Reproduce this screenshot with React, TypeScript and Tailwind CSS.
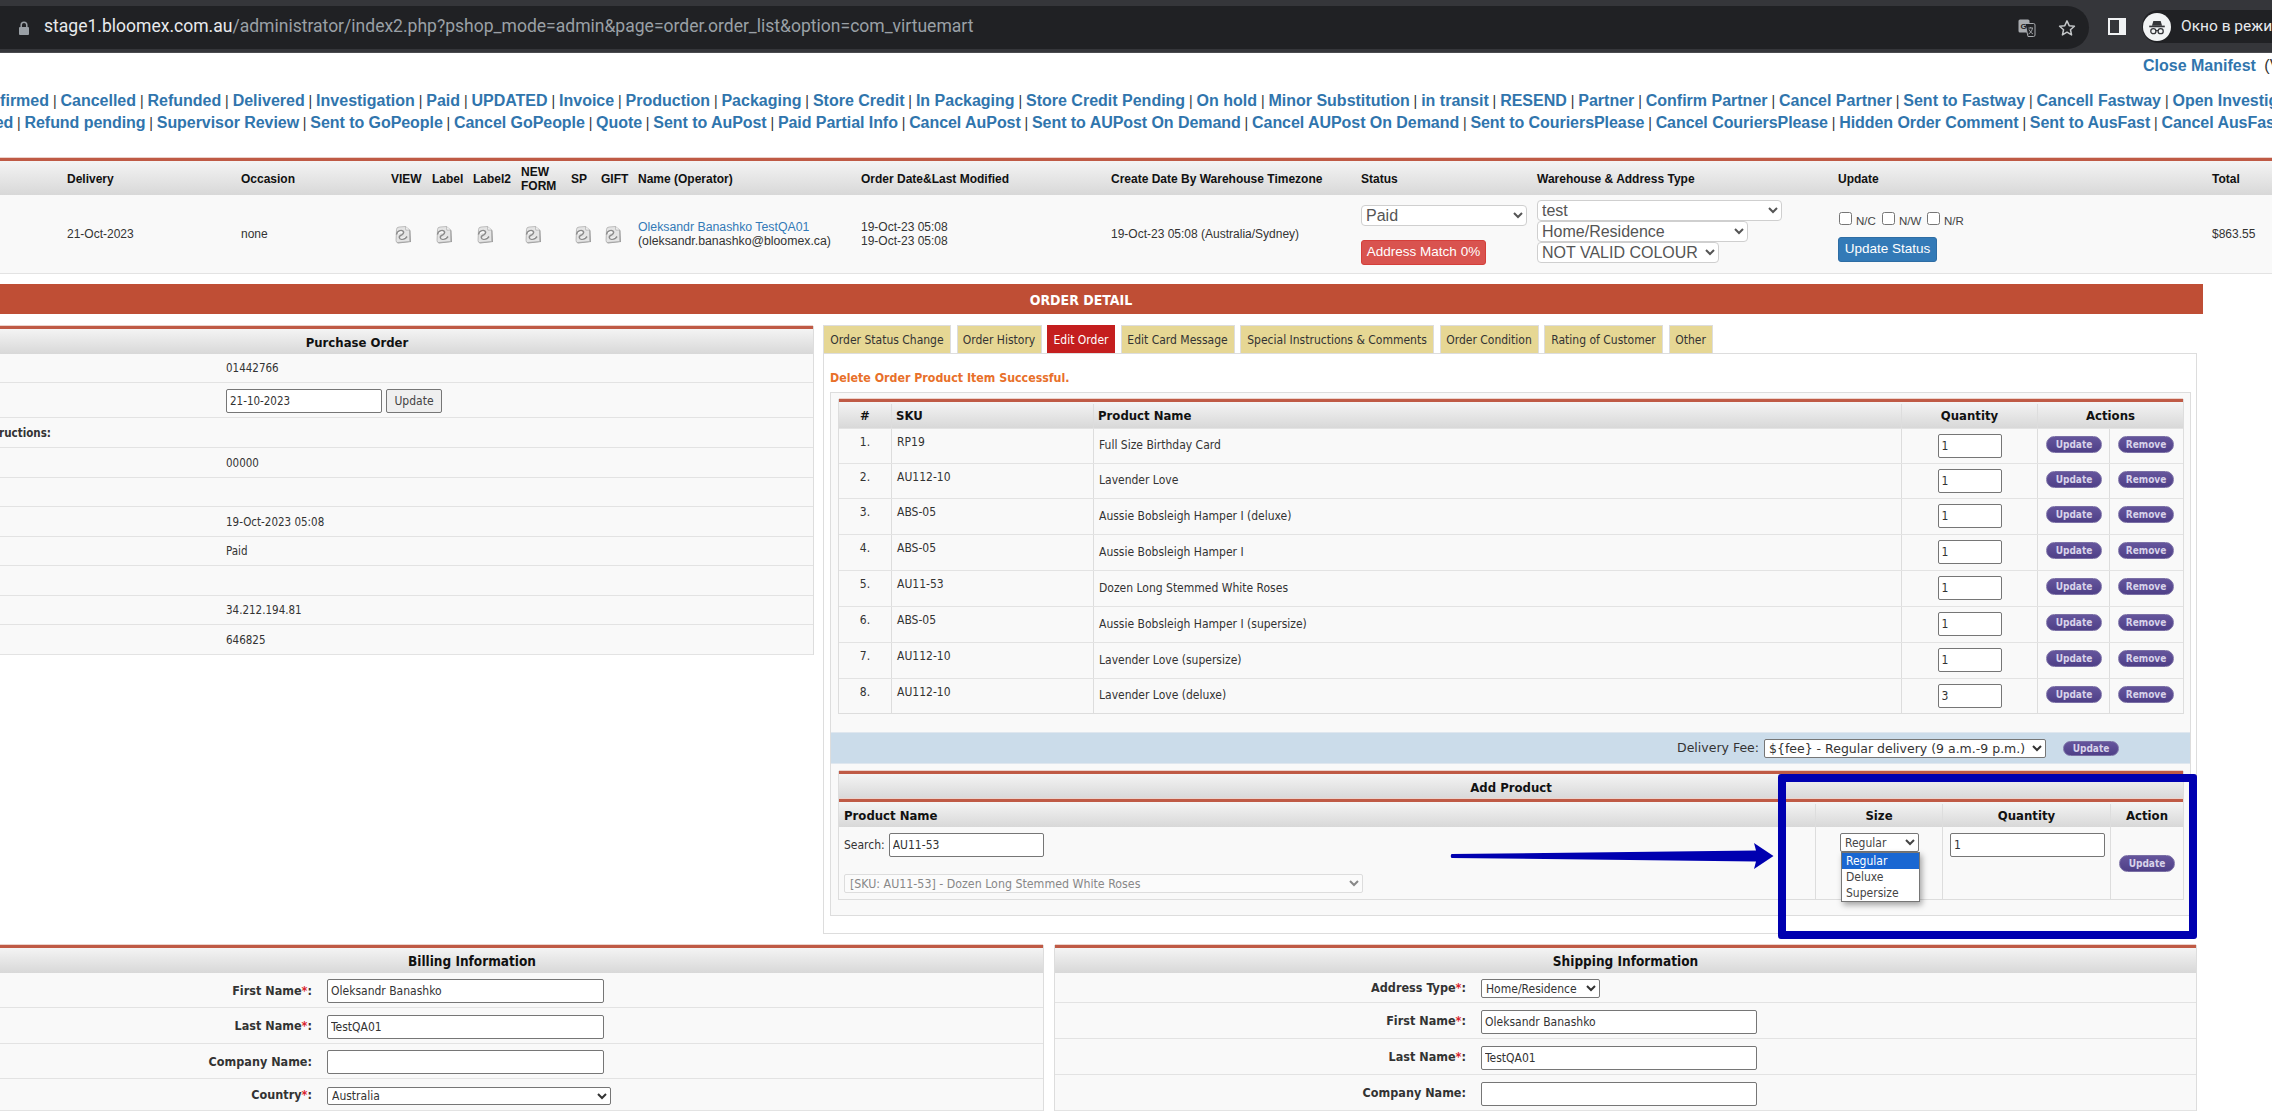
import React from "react";

const band = "border-t-[3px] border-t-[#bf5a45] pt-[2px] shadow-[0_-1px_0_#ecd2cb] bg-linear-to-b from-[#f4f4f4] to-[#d8d8d8]";
const inputCls = "bg-white border border-[#767676] rounded-[2px] px-[3px] text-[#333] outline-none";

function PageIcon() {
  return (
    <svg width="18" height="18" viewBox="0 0 18 18">
      <path d="M3 3.5 Q3 1.5 5 1.5 L12 0.8 L16.5 4.5 L17 16 L4 17.5 Q2.5 17 2.5 15 Z" fill="#9c9c9c" />
      <path d="M2.5 3.5 Q2.5 1.2 5 1 L11.5 0.5 L15.5 4 L15.8 15.5 L3.5 16.5 Q2 16.2 2 14.5 Z" fill="#e4e4e4" stroke="#a8a8a8" strokeWidth="0.7" />
      <path d="M11.5 0.5 L11.8 4.2 L15.5 4" fill="#f6f6f6" stroke="#a8a8a8" strokeWidth="0.7" />
      <path d="M2.5 8.5 C3 5 7 3.8 9 5.2 C10.8 6.6 8.5 8.8 6.5 9.5 C4.5 10.4 5 13 7.5 13.2 C10 13.4 12 12 13 10.5" fill="none" stroke="#8a8a8a" strokeWidth="1.5" />
      <path d="M4 7.5 C5.5 6 7.5 5.8 8.3 6.5" fill="none" stroke="#ffffff" strokeWidth="1.1" />
      <path d="M6.5 12 C8 12.6 10 12 11.5 10.8" fill="none" stroke="#ffffff" strokeWidth="0.9" />
    </svg>
  );
}

function PurpleBtn({ label, cls = "h-[17px]" }: { label: string; cls?: string }) {
  return (
    <span className={`inline-flex w-[56px] items-center justify-center rounded-full border border-[#7a6fa5] bg-linear-to-b from-[#65559c] to-[#4f4088] text-[10px] font-bold text-[#d8d3ea] ${cls}`}>
      {label}
    </span>
  );
}

function LinkRow({ items, cls }: { items: string[]; cls: string }) {
  return (
    <div className={`h-[22px] whitespace-nowrap text-[16px] leading-[22px] ${cls}`}>
      {items.map((t, i) => (
        <React.Fragment key={i}>
          {i > 0 && <span className="text-[14px] font-normal text-[#333]"> | </span>}
          <a className="font-bold text-[#3075ad]">{t}</a>
        </React.Fragment>
      ))}
    </div>
  );
}

const row1 = ["Confirmed", "Cancelled", "Refunded", "Delivered", "Investigation", "Paid", "UPDATED", "Invoice", "Production", "Packaging", "Store Credit", "In Packaging", "Store Credit Pending", "On hold", "Minor Substitution", "in transit", "RESEND", "Partner", "Confirm Partner", "Cancel Partner", "Sent to Fastway", "Cancell Fastway", "Open Investigation"];
const row2 = ["Declined", "Refund pending", "Supervisor Review", "Sent to GoPeople", "Cancel GoPeople", "Quote", "Sent to AuPost", "Paid Partial Info", "Cancel AuPost", "Sent to AUPost On Demand", "Cancel AUPost On Demand", "Sent to CouriersPlease", "Cancel CouriersPlease", "Hidden Order Comment", "Sent to AusFast", "Cancel AusFast"];

const orderCols = "grid grid-cols-[67px_174px_150px_41px_41px_48px_50px_30px_37px_223px_250px_250px_176px_301px_374px_60px]";
const nativeTop = "rounded-[4px] border border-[#cfcfcf] bg-white text-[16px] text-[#555]";

function ChromeBar() {
  return (
    <div className="flex h-[53px] items-start border-b border-b-[#4a4b4f] bg-[#35363a]">
      <div className="mt-[6px] flex h-[43px] w-[2089px] items-center rounded-r-[22px] bg-[#202124] pl-[18px]">
        <svg width="12" height="14" viewBox="0 0 12 14" className="mr-[14px]">
          <rect x="1" y="6" width="10" height="8" rx="1" fill="#9aa0a6" />
          <path d="M3.2 6 V4 a2.8 2.8 0 0 1 5.6 0 V6" fill="none" stroke="#9aa0a6" strokeWidth="1.5" />
        </svg>
        <div className="whitespace-nowrap pb-[2px] font-['Roboto',sans-serif] text-[17.55px]">
          <span className="text-[#e8eaed]">stage1.bloomex.com.au</span>
          <span className="text-[#9aa0a6]">/administrator/index2.php?pshop_mode=admin&amp;page=order.order_list&amp;option=com_virtuemart</span>
        </div>
        <div className="ml-auto flex items-center gap-[22px] pr-[13px]">
          <svg width="18" height="18" viewBox="0 0 18 18">
            <rect x="0.5" y="0.5" width="11" height="13" rx="1.5" fill="#a8abaf" />
            <path d="M7 4.5 H15.5 a1.5 1.5 0 0 1 1.5 1.5 V16 a1.5 1.5 0 0 1 -1.5 1.5 H10 Z" fill="#202124" stroke="#a8abaf" />
            <text x="2.5" y="10" fontSize="8" fontWeight="700" fill="#202124" fontFamily="Liberation Sans">G</text>
            <path d="M10.5 9 H15 M12.7 8 V9 M14.5 9 C14 12 12.5 14 10.5 15 M11 10.5 C12 12.5 13.5 14 15 15" fill="none" stroke="#a8abaf" strokeWidth="0.9" />
          </svg>
          <svg width="18" height="18" viewBox="0 0 24 24" fill="none" stroke="#c4c7c9" strokeWidth="2" strokeLinejoin="round">
            <path d="M12 2.5 l2.9 6.4 7 .7 -5.3 4.7 1.5 6.9 -6.1 -3.6 -6.1 3.6 1.5 -6.9 L2.1 9.6 l7 -.7 Z" />
          </svg>
        </div>
      </div>
      <div className="ml-[19px] mt-[18px] flex h-[17px] w-[18px] justify-end border-2 border-[#f1f3f4] bg-[#35363a]">
        <div className="h-full w-[5px] bg-[#f1f3f4]" />
      </div>
      <div className="ml-[16px] mt-[10px] flex h-[33px] w-[130px] items-center overflow-hidden rounded-l-full bg-[#202124] pl-[1px]">
        <div className="flex h-[28px] w-[28px] shrink-0 items-center justify-center rounded-full bg-[#f1f3f4]">
          <svg width="22" height="22" viewBox="0 0 24 24">
            <path d="M8 5.5 H16 L17.5 10.5 H6.5 Z" fill="#35363a" />
            <rect x="3.5" y="10.5" width="17" height="1.8" fill="#35363a" />
            <circle cx="8" cy="16.5" r="2.8" fill="none" stroke="#35363a" strokeWidth="1.4" />
            <circle cx="16" cy="16.5" r="2.8" fill="none" stroke="#35363a" strokeWidth="1.4" />
            <path d="M10.8 16 H13.2" stroke="#35363a" strokeWidth="1.2" />
          </svg>
        </div>
        <span className="ml-[10px] whitespace-nowrap font-['Roboto',sans-serif] text-[15.5px] text-[#e8eaed]">Окно в режиме инкогнито</span>
      </div>
    </div>
  );
}

function OrdersTable() {
  const heads = ["", "Delivery", "Occasion", "VIEW", "Label", "Label2", "NEW FORM", "SP", "GIFT", "Name (Operator)", "Order Date&Last Modified", "Create Date By Warehouse Timezone", "Status", "Warehouse & Address Type", "Update", "Total"];
  return (
    <div className="mt-[24px] font-['Liberation_Sans',sans-serif] text-[12px] text-[#333]">
      <div className={`${orderCols} ${band} h-[37px] items-center font-bold leading-[14.5px] text-[#111]`}>
        {heads.map((h, i) => (
          <div key={i} className={i === 6 ? "w-[40px]" : "whitespace-nowrap"}>{h}</div>
        ))}
      </div>
      <div className={`${orderCols} h-[79px] border-b border-b-[#e3e3e3] bg-[#f9f9f9]`}>
        <div />
        <div className="self-center">21-Oct-2023</div>
        <div className="self-center">none</div>
        {[0, 1, 2, 3, 4, 5].map((i) => (
          <div key={i} className="self-center pl-[3px] pt-[1px]"><PageIcon /></div>
        ))}
        <div className="self-center whitespace-nowrap text-[12.3px] leading-[14px]">
          <div className="text-[#337ab7]">Oleksandr Banashko TestQA01</div>
          <div>(oleksandr.banashko@bloomex.ca)</div>
        </div>
        <div className="self-center leading-[14px]">
          <div>19-Oct-23 05:08</div>
          <div>19-Oct-23 05:08</div>
        </div>
        <div className="self-center whitespace-nowrap">19-Oct-23 05:08 (Australia/Sydney)</div>
        <div className="flex flex-col items-start pt-[10px]">
          <select className={`${nativeTop} h-[21px] w-[166px]`}><option>Paid</option></select>
          <button className="mt-[14px] h-[25px] w-[125px] whitespace-nowrap rounded-[3px] border border-[#d43f3a] bg-[#d9534f] text-[13.5px] text-white">Address Match 0%</button>
        </div>
        <div className="flex flex-col items-start pt-[5px]">
          <select className={`${nativeTop} h-[21px] w-[245px]`}><option>test</option></select>
          <select className={`${nativeTop} h-[21px] w-[211px]`}><option>Home/Residence</option></select>
          <select className={`${nativeTop} h-[21px] w-[182px]`}><option>NOT VALID COLOUR</option></select>
        </div>
        <div className="flex flex-col items-start pl-[1px] pt-[17px]">
          <div className="flex h-[25px] items-start text-[11.5px] text-[#444]">
            <input type="checkbox" className="mr-[4px] h-[13px] w-[13px]" />
            <span className="mt-[1px] w-[26px]">N/C</span>
            <input type="checkbox" className="mr-[4px] h-[13px] w-[13px]" />
            <span className="mt-[1px] w-[28px]">N/W</span>
            <input type="checkbox" className="mr-[4px] h-[13px] w-[13px]" />
            <span className="mt-[1px]">N/R</span>
          </div>
          <button className="-ml-[1px] h-[25px] w-[99px] rounded-[3px] border border-[#2e6da4] bg-[#337ab7] text-[13.5px] text-white">Update Status</button>
        </div>
        <div className="self-center">$863.55</div>
      </div>
    </div>
  );
}

const poRows: { label?: string; value?: string; cls: string; input?: boolean }[] = [
  { value: "01442766", cls: "h-[29px]" },
  { input: true, cls: "h-[35px]" },
  { label: "Special Instructions:", cls: "h-[30px]" },
  { value: "00000", cls: "h-[30px]" },
  { cls: "h-[29px]" },
  { value: "19-Oct-2023 05:08", cls: "h-[30px]" },
  { value: "Paid", cls: "h-[29px]" },
  { cls: "h-[30px]" },
  { value: "34.212.194.81", cls: "h-[29px]" },
  { value: "646825", cls: "h-[30px]" },
];

function PurchaseOrder() {
  return (
    <div className="mt-[1px] w-[913px] shrink-0 self-start border-r border-r-[#ddd] text-[11.5px]">
      <div className={`${band} flex h-[28px] items-center justify-center text-[13px] font-bold text-[#111]`}>Purchase Order</div>
      {poRows.map((r, i) => (
        <div key={i} className={`grid grid-cols-[150px_175px_1fr] items-center border-b border-b-[#e3e3e3] bg-[#f9f9f9] pt-[2px] ${r.cls}`}>
          <div className="whitespace-nowrap text-right font-bold">{r.label}</div>
          <div />
          <div className="flex items-center">
            {r.value}
            {r.input && (
              <>
                <input readOnly defaultValue="21-10-2023" className={`${inputCls} h-[24px] w-[156px]`} />
                <button className="ml-[4px] h-[24px] w-[56px] rounded-[2px] border border-[#767676] bg-[#efefef] text-[12px] text-[#444]">Update</button>
              </>
            )}
          </div>
        </div>
      ))}
    </div>
  );
}

const tabs: { t: string; cls: string; on?: boolean }[] = [
  { t: "Order Status Change", cls: "w-[128px]" },
  { t: "Order History", cls: "w-[85px]" },
  { t: "Edit Order", cls: "w-[68px]", on: true },
  { t: "Edit Card Message", cls: "w-[114px]" },
  { t: "Special Instructions & Comments", cls: "w-[194px]" },
  { t: "Order Condition", cls: "w-[99px]" },
  { t: "Rating of Customer", cls: "w-[119px]" },
  { t: "Other", cls: "w-[44px]" },
];

const items: { n: string; sku: string; name: string; q: string; cls: string }[] = [
  { n: "1.", sku: "RP19", name: "Full Size Birthday Card", q: "1", cls: "h-[35px]" },
  { n: "2.", sku: "AU112-10", name: "Lavender Love", q: "1", cls: "h-[35px]" },
  { n: "3.", sku: "ABS-05", name: "Aussie Bobsleigh Hamper I (deluxe)", q: "1", cls: "h-[36px]" },
  { n: "4.", sku: "ABS-05", name: "Aussie Bobsleigh Hamper I", q: "1", cls: "h-[36px]" },
  { n: "5.", sku: "AU11-53", name: "Dozen Long Stemmed White Roses", q: "1", cls: "h-[36px]" },
  { n: "6.", sku: "ABS-05", name: "Aussie Bobsleigh Hamper I (supersize)", q: "1", cls: "h-[36px]" },
  { n: "7.", sku: "AU112-10", name: "Lavender Love (supersize)", q: "1", cls: "h-[36px]" },
  { n: "8.", sku: "AU112-10", name: "Lavender Love (deluxe)", q: "3", cls: "h-[35px]" },
];

const itemCols = "grid grid-cols-[53px_202px_808px_136px_72px_73px]";
const cellB = "border-r border-r-[#ddd]";

function ItemsTable() {
  return (
    <div className="ml-[7px] mr-[6px] mt-[6px] border-x border-b border-[#ddd] border-t-0">
      <div className={`${itemCols} ${band} h-[29px] text-[13px] font-bold text-[#111]`}>
        <div className={`${cellB} flex items-center justify-center`}>#</div>
        <div className={`${cellB} flex items-center pl-[4px]`}>SKU</div>
        <div className={`${cellB} flex items-center pl-[4px]`}>Product Name</div>
        <div className={`${cellB} flex items-center justify-center`}>Quantity</div>
        <div className="col-span-2 flex items-center justify-center">Actions</div>
      </div>
      {items.map((r, i) => (
        <div key={i} className={`${itemCols} border-t border-t-[#e3e3e3] first:border-t-0 ${r.cls}`}>
          <div className={`${cellB} pt-[6px] text-center leading-[14px]`}>{r.n}</div>
          <div className={`${cellB} pl-[5px] pt-[6px] leading-[14px]`}>{r.sku}</div>
          <div className={`${cellB} flex items-center pb-[2px] pl-[5px]`}>{r.name}</div>
          <div className={`${cellB} flex justify-center pt-[5px]`}>
            <input readOnly defaultValue={r.q} className={`${inputCls} h-[24px] w-[64px]`} />
          </div>
          <div className={`${cellB} pl-[8px] pt-[6px]`}><PurpleBtn label="Update" /></div>
          <div className="pl-[8px] pt-[6px]"><PurpleBtn label="Remove" /></div>
        </div>
      ))}
    </div>
  );
}

function AddProduct() {
  const cols = "grid grid-cols-[977px_127px_168px_72px]";
  return (
    <div className="ml-[7px] mr-[6px] mt-[7px] border-x border-b border-[#ddd]">
      <div className={`${band} flex h-[28px] items-center justify-center text-[13px] font-bold text-[#111]`}>Add Product</div>
      <div className={`${cols} ${band} h-[28px] text-[13px] font-bold text-[#111]`}>
        <div className={`${cellB} flex items-center pl-[5px]`}>Product Name</div>
        <div className={`${cellB} flex items-center justify-center`}>Size</div>
        <div className={`${cellB} flex items-center justify-center`}>Quantity</div>
        <div className="flex items-center justify-center">Action</div>
      </div>
      <div className={`${cols} h-[72px]`}>
        <div className={`${cellB} pl-[5px] pt-[6px]`}>
          <div className="flex items-center">
            <span>Search:</span>
            <input readOnly defaultValue="AU11-53" className={`${inputCls} ml-[4px] h-[24px] w-[155px]`} />
          </div>
          <select disabled className="mt-[17px] h-[19px] w-[519px] rounded-[2px] border border-[#ddd] bg-[#fbfbfb] pl-[1px] text-[12.3px] text-[#888] opacity-100">
            <option>[SKU: AU11-53] - Dozen Long Stemmed White Roses</option>
          </select>
        </div>
        <div className={`${cellB} relative pl-[24px] pt-[6px]`}>
          <select className="h-[19px] w-[79px] rounded-[2px] border border-[#767676] bg-white text-[12px] text-[#444]"><option>Regular</option></select>
          <div className="absolute left-[25px] top-[25px] z-10 w-[79px] border border-[#767676] bg-white text-[12px] leading-[16px] text-[#444] shadow-[2px_3px_6px_rgba(0,0,0,0.35)]">
            <div className="bg-[#1967d2] pl-[4px] text-white">Regular</div>
            <div className="pl-[4px]">Deluxe</div>
            <div className="pl-[4px]">Supersize</div>
          </div>
        </div>
        <div className={`${cellB} pl-[7px] pt-[6px]`}>
          <input readOnly defaultValue="1" className={`${inputCls} h-[24px] w-[155px]`} />
        </div>
        <div className="pl-[8px] pt-[27px]"><PurpleBtn label="Update" /></div>
      </div>
    </div>
  );
}

function EditPanel() {
  return (
    <div className="ml-[9px] w-[1374px] shrink-0 text-[12px]">
      <div className="flex h-[28px] gap-[5.5px]">
        {tabs.map((t) => (
          <div key={t.t} className={`flex items-center justify-center whitespace-nowrap border-x border-t ${t.cls} ${t.on ? "border-[#c41e1e] bg-[#c41e1e] text-white" : "border-[#ddd] bg-[#e6d794] text-[#333]"}`}>{t.t}</div>
        ))}
      </div>
      <div className="h-[581px] border border-[#ddd] pl-[6px] pr-[5px]">
        <div className="h-[38px] pt-[16px] text-[12.3px] font-bold leading-[16px] text-[#e8702a]">Delete Order Product Item Successful.</div>
        <div className="h-[524px] border border-[#ddd] bg-[#f9f9f9] text-[#333]">
          <ItemsTable />
          <div className="mt-[18px] flex h-[32px] items-center justify-end border-y border-y-[#dfe7ef] bg-[#cbdcea] pr-[71px]">
            <span className="mr-[5px] font-['DejaVu_Sans',sans-serif] text-[12.5px]">Delivery Fee:</span>
            <select className="h-[19px] w-[282px] rounded-[2px] border border-[#767676] bg-white font-['DejaVu_Sans',sans-serif] text-[12.5px] text-[#333]"><option>{"${fee} - Regular delivery (9 a.m.-9 p.m.)"}</option></select>
            <div className="ml-[17px]"><PurpleBtn label="Update" cls="h-[15px]" /></div>
          </div>
          <AddProduct />
        </div>
      </div>
    </div>
  );
}

function Req() {
  return <span className="text-[#d9232e]">*</span>;
}

function FormRow({ label, req, cls, children }: { label: string; req?: boolean; cls: string; children: React.ReactNode }) {
  return (
    <div className={`grid grid-cols-[411px_1fr] items-center gap-x-[15px] border-b border-b-[#e3e3e3] bg-[#f9f9f9] pt-[2px] ${cls}`}>
      <div className="text-right text-[12.5px] font-bold text-[#333]">{label}{req && <Req />}:</div>
      <div className="flex items-center">{children}</div>
    </div>
  );
}

function BottomPanels() {
  const inp = `${inputCls} h-[24px]`;
  return (
    <div className="flex gap-[10px] text-[12px]">
      <div className="w-[1143px] shrink-0 border-r border-r-[#ddd]">
        <div className={`${band} flex h-[28px] items-center justify-center text-[13.5px] font-bold text-[#111]`}>Billing Information</div>
        <FormRow label="First Name" req cls="h-[35px]"><input readOnly defaultValue="Oleksandr Banashko" className={`${inp} w-[277px]`} /></FormRow>
        <FormRow label="Last Name" req cls="h-[36px]"><input readOnly defaultValue="TestQA01" className={`${inp} w-[277px]`} /></FormRow>
        <FormRow label="Company Name" cls="h-[35px]"><input readOnly className={`${inp} w-[277px]`} /></FormRow>
        <FormRow label="Country" req cls="h-[32px]">
          <select className="h-[18px] w-[284px] rounded-[2px] border border-[#767676] bg-white text-[12px] text-[#333]"><option>Australia</option></select>
        </FormRow>
      </div>
      <div className="w-[1143px] shrink-0 border-x border-x-[#ddd]">
        <div className={`${band} flex h-[28px] items-center justify-center text-[13.5px] font-bold text-[#111]`}>Shipping Information</div>
        <FormRow label="Address Type" req cls="h-[30px]">
          <select className="h-[19px] w-[119px] rounded-[2px] border border-[#767676] bg-white text-[12px] text-[#333]"><option>Home/Residence</option></select>
        </FormRow>
        <FormRow label="First Name" req cls="h-[36px]"><input readOnly defaultValue="Oleksandr Banashko" className={`${inp} w-[276px]`} /></FormRow>
        <FormRow label="Last Name" req cls="h-[36px]"><input readOnly defaultValue="TestQA01" className={`${inp} w-[276px]`} /></FormRow>
        <FormRow label="Company Name" cls="h-[36px]"><input readOnly className={`${inp} w-[276px]`} /></FormRow>
      </div>
    </div>
  );
}

export default function App() {
  return (
    <div className="relative h-[1114px] w-[2272px] overflow-hidden bg-white font-['Liberation_Sans',sans-serif]">
      <ChromeBar />
      <div className="h-[37px] whitespace-nowrap pl-[2143px] text-[16px] font-bold leading-[26px] text-[#3075ad]">
        Close Manifest <span className="ml-[4px] font-normal text-[#333]">(View</span>
      </div>
      <LinkRow items={row1} cls="-ml-[31px]" />
      <LinkRow items={row2} cls="-ml-[53px] tracking-[-0.055px]" />
      <OrdersTable />
      <div className="-ml-[41px] mt-[10px] flex h-[30px] w-[2244px] items-center justify-center bg-[#bf4e35] pt-[2px] font-['DejaVu_Sans_Condensed','Noto_Sans',sans-serif] text-[14px] font-bold text-white">ORDER DETAIL</div>
      <div className="-ml-[99px] mt-[11px] flex h-[620px] items-start font-['DejaVu_Sans_Condensed','Noto_Sans',sans-serif] text-[#333]">
        <PurchaseOrder />
        <EditPanel />
      </div>
      <div className="-ml-[99px] font-['DejaVu_Sans_Condensed','Noto_Sans',sans-serif] text-[#333]">
        <BottomPanels />
      </div>
      <div className="absolute left-[1778px] top-[774px] h-[165px] w-[419px] rounded-[3px] border-[8px] border-[#0000b0]" />
      <svg className="absolute left-[1450px] top-[842px]" width="326" height="28" viewBox="0 0 326 28">
        <path d="M1.5 12 L306 8.5 L304 1 L323.5 14 L304 27 L306 19.5 L1.5 16 Q0 14 1.5 12 Z" fill="#0000b0" />
      </svg>
    </div>
  );
}
